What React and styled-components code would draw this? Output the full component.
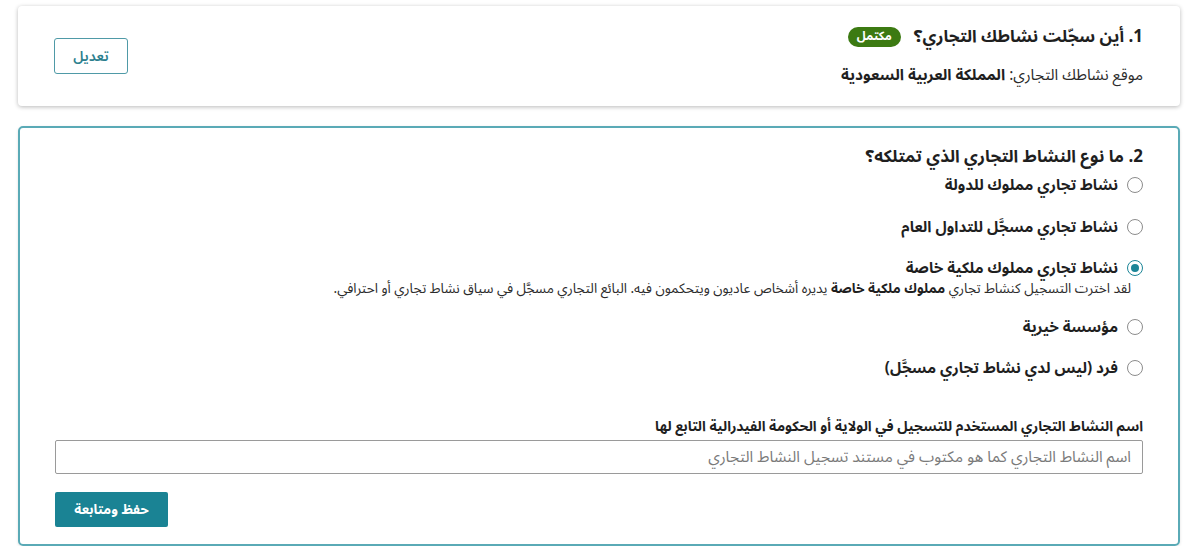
import React, { useState } from "react";
import styled, { createGlobalStyle } from "styled-components";

const GlobalStyle = createGlobalStyle`
  body {
    margin: 0;
    background: #ffffff;
    font-family: "Noto Sans Arabic", "Noto Sans", "DejaVu Sans", sans-serif;
    color: #1f1f1f;
  }
`;

const Page = styled.div`
  direction: rtl;
  padding: 6px 21px 0 18px;
  display: flex;
  flex-direction: column;
  gap: 20px;
`;

const SummaryCard = styled.div`
  display: flex;
  align-items: center;
  justify-content: space-between;
  height: 100px;
  box-sizing: border-box;
  padding: 0 37px 0 36px;
  background: #fff;
  border-radius: 4px;
  box-shadow: 0 1px 4px rgba(0, 0, 0, 0.28);
`;

const SummaryText = styled.div`
  display: flex;
  flex-direction: column;
  gap: 14px;
`;

const TitleRow = styled.div`
  display: flex;
  align-items: center;
  gap: 13px;
`;

const Title = styled.h2`
  margin: 0;
  font-size: 17px;
  font-weight: 700;
  line-height: 24px;
  color: #1f1f1f;
`;

const Badge = styled.span`
  display: inline-block;
  background: #3c7a12;
  color: #fff;
  font-size: 12px;
  font-weight: 700;
  line-height: 20px;
  padding: 0 9px;
  border-radius: 10px;
`;

const SummaryLine = styled.p`
  margin: 0;
  font-size: 15.4px;
  line-height: 24px;
  color: #2b2b2b;

  strong {
    font-weight: 700;
    color: #1f1f1f;
  }
`;

const OutlineButton = styled.button`
  font-family: inherit;
  width: 74px;
  height: 36px;
  border: 1.5px solid #4f9aa7;
  border-radius: 3px;
  background: #fff;
  color: #2c7f8e;
  font-size: 14px;
  font-weight: 600;
  cursor: pointer;
`;

const FormCard = styled.div`
  border: 2px solid #5aaab6;
  border-radius: 5px;
  padding: 17px 35px 17px 35px;
  box-shadow: 0 1px 3px rgba(0, 0, 0, 0.12);
  display: flex;
  flex-direction: column;
`;

const Options = styled.div`
  display: flex;
  flex-direction: column;
  gap: 17.5px;
  margin-top: 4px;
`;

const OptionItem = styled.div`
  display: flex;
  flex-direction: column;
`;

const OptionLabel = styled.label`
  display: flex;
  align-items: center;
  gap: 9px;
  font-size: 15.2px;
  font-weight: 700;
  line-height: 24px;
  color: #1f1f1f;
  cursor: pointer;
`;

const Radio = styled.span`
  flex: none;
  width: 16px;
  height: 16px;
  box-sizing: border-box;
  border-radius: 50%;
  border: 1.5px solid ${(p) => (p.checked ? "#1b8597" : "#8c8c8c")};
  display: flex;
  align-items: center;
  justify-content: center;

  &::after {
    content: "";
    width: 8px;
    height: 8px;
    border-radius: 50%;
    background: ${(p) => (p.checked ? "#1b8597" : "transparent")};
  }
`;

const Hint = styled.p`
  margin: 0 12px 0 0;
  font-size: 13.6px;
  line-height: 17px;
  color: #2b2b2b;

  strong {
    font-weight: 700;
    color: #1f1f1f;
  }
`;

const FieldLabel = styled.label`
  margin-top: 36px;
  font-size: 14px;
  font-weight: 700;
  line-height: 22px;
  color: #1f1f1f;
`;

const TextInput = styled.input`
  margin-top: 2px;
  height: 34px;
  box-sizing: border-box;
  border: 1px solid #9a9a9a;
  border-radius: 2px;
  padding: 0 11px;
  font-family: inherit;
  font-size: 15.4px;
  direction: rtl;

  &::placeholder {
    color: #7a7a7a;
  }
`;

const Actions = styled.div`
  margin-top: 18px;
  display: flex;
  justify-content: flex-end;
`;

const PrimaryButton = styled.button`
  font-family: inherit;
  width: 113px;
  height: 35px;
  border: none;
  border-radius: 2px;
  background: #1a8394;
  color: #fff;
  font-size: 13.5px;
  font-weight: 700;
  cursor: pointer;
`;

const options = [
  { id: "state", label: "نشاط تجاري مملوك للدولة" },
  { id: "public", label: "نشاط تجاري مسجَّل للتداول العام" },
  { id: "private", label: "نشاط تجاري مملوك ملكية خاصة" },
  { id: "charity", label: "مؤسسة خيرية" },
  { id: "individual", label: "فرد (ليس لدي نشاط تجاري مسجَّل)" },
];

const App = () => {
  const [selected, setSelected] = useState("private");

  return (
    <>
      <GlobalStyle />
      <Page>
        <SummaryCard>
          <SummaryText>
            <TitleRow>
              <Title>1. أين سجّلت نشاطك التجاري؟</Title>
              <Badge>مكتمل</Badge>
            </TitleRow>
            <SummaryLine>
              موقع نشاطك التجاري: <strong>المملكة العربية السعودية</strong>
            </SummaryLine>
          </SummaryText>
          <OutlineButton>تعديل</OutlineButton>
        </SummaryCard>

        <FormCard>
          <Title>2. ما نوع النشاط التجاري الذي تمتلكه؟</Title>
          <Options>
            {options.map((item) => (
              <OptionItem key={item.id}>
                <OptionLabel onClick={() => setSelected(item.id)}>
                  <Radio checked={selected === item.id} />
                  {item.label}
                </OptionLabel>
                {item.id === "private" && selected === "private" && (
                  <Hint>
                    لقد اخترت التسجيل كنشاط تجاري <strong>مملوك ملكية خاصة</strong>{" "}
                    يديره أشخاص عاديون ويتحكمون فيه. البائع التجاري مسجَّل في سياق
                    نشاط تجاري أو احترافي.
                  </Hint>
                )}
              </OptionItem>
            ))}
          </Options>

          <FieldLabel>
            اسم النشاط التجاري المستخدم للتسجيل في الولاية أو الحكومة الفيدرالية
            التابع لها
          </FieldLabel>
          <TextInput placeholder="اسم النشاط التجاري كما هو مكتوب في مستند تسجيل النشاط التجاري" />

          <Actions>
            <PrimaryButton>حفظ ومتابعة</PrimaryButton>
          </Actions>
        </FormCard>
      </Page>
    </>
  );
};

export default App;
